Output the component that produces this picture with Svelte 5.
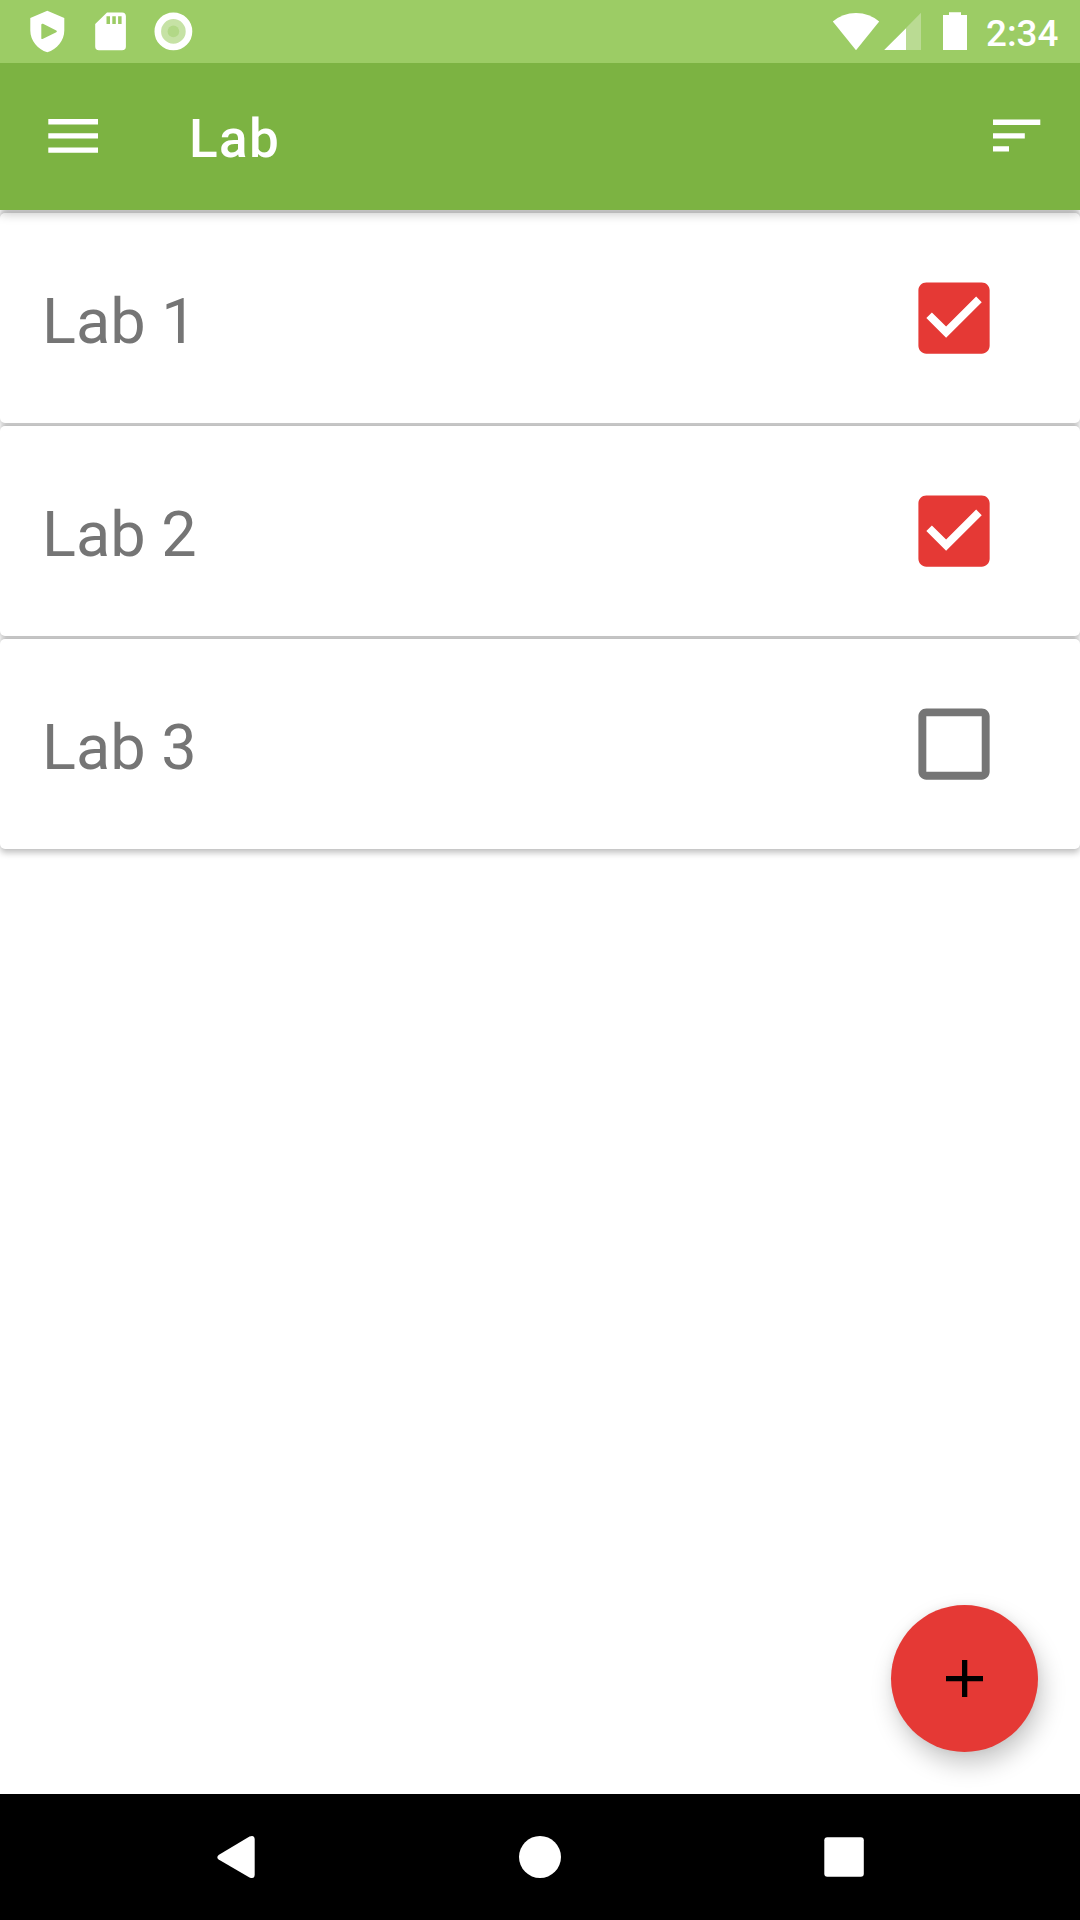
<script>
  let labs = $state([
    { name: 'Lab 1', done: true },
    { name: 'Lab 2', done: true },
    { name: 'Lab 3', done: false }
  ]);
</script>

<div class="screen">
  <div class="status">
    <div class="group">
      <svg width="63" height="63" viewBox="16 0 63 63">
        <path fill="#fff" fill-rule="evenodd" d="M47.3 10.7 64.3 18V30.500C64.300 40.500 57 49.500 47.300 52.200 37.600 49.500 30.300 40.500 30.300 30.500V18ZM41.300 24.800V38.200Q41.500 39.600 43 38.800L56.300 32.200Q57.600 31.300 56.300 30.500L43 23.800Q41.500 23.200 41.300 24.800Z" />
      </svg>
      <svg width="63" height="63" viewBox="79 0 63 63">
        <path fill="#fff" fill-rule="evenodd" d="M107 12.500H122Q125.900 12.500 125.900 16.300V46.500Q125.900 50.300 122 50.300H99Q95.200 50.300 95.200 46.500V24ZM106.500 16.200V24H110V16.200ZM112.300 16.200V24H115.800V16.200ZM118.100 16.200V24H121.600V16.200Z" />
      </svg>
      <svg width="63" height="63" viewBox="142 0 63 63">
        <circle cx="173.400" cy="31.400" r="12.800" fill="#c6e2a5" />
        <circle cx="173.400" cy="31.400" r="5.800" fill="#b2d887" />
        <circle cx="173.400" cy="31.400" r="15.600" fill="none" stroke="#fff" stroke-width="6.600" />
      </svg>
    </div>
    <div class="group">
      <svg width="50" height="63" viewBox="831 0 50 63">
        <path fill="#fff" d="M856 50.300 832.800 21.500Q842.500 12.900 856 12.900T879.200 21.500Z" />
      </svg>
      <svg width="46" height="63" viewBox="881 0 46 63">
        <path fill="#fff" fill-opacity=".3" d="M906 28 921 12.800V50H906Z" />
        <path fill="#fff" d="M884.200 50 906 28.200V50Z" />
      </svg>
      <svg width="59" height="63" viewBox="927 0 59 63">
        <path fill="#fff" d="M943 15H949V12.200H961V15H967V50H943Z" />
      </svg>
      <span class="time">2:34</span>
    </div>
  </div>

  <header class="bar">
    <svg width="63" height="63" viewBox="42 105 63 63">
      <path fill="#fff" d="M48.300 119H98V124.400H48.300ZM48.300 133.200H98V138.500H48.300ZM48.300 147.400H98V152.800H48.300Z" />
    </svg>
    <h1>Lab</h1>
    <svg width="63" height="63" viewBox="985 105 63 63">
      <path fill="#fff" d="M993 119.500H1040.300V125H993ZM993 133.200H1024.800V138.600H993ZM993 146.200H1009V151.500H993Z" />
    </svg>
  </header>

  <main>
    {#each labs as lab}
      <div class="card">
        <span>{lab.name}</span>
        <button aria-label={lab.name} onclick={() => (lab.done = !lab.done)}>
          <svg width="95" height="95" viewBox="0.120 0.120 24 24">
            {#if lab.done}
              <path fill="#e53935" d="M19 3H5c-1.110 0-2 .9-2 2v14c0 1.100.890 2 2 2h14c1.110 0 2-.9 2-2V5c0-1.100-.890-2-2-2zm-9 14l-5-5 1.410-1.410L10 14.170l7.590-7.590L19 8l-9 9z" />
            {:else}
              <path fill="#757575" d="M19 5v14H5V5h14m0-2H5c-1.100 0-2 .9-2 2v14c0 1.100.9 2 2 2h14c1.100 0 2-.9 2-2V5c0-1.100-.9-2-2-2z" />
            {/if}
          </svg>
        </button>
      </div>
    {/each}
    <button class="fab" aria-label="Add">
      <svg width="63" height="63" viewBox="0 0 63 63">
        <path fill="#000" d="M13 29H29V13H34.300V29H50V34.200H34.300V50H29V34.200H13Z" />
      </svg>
    </button>
  </main>

  <nav>
    <svg width="304" height="126" viewBox="84 1794 304 126">
      <path fill="#fff" d="M218.600 1855 249.500 1836.500Q254.700 1834.600 254.700 1839.500V1874.500Q254.700 1879.400 249.500 1877.500L218.600 1859.500Q216 1857.300 218.600 1855Z" />
    </svg>
    <svg width="304" height="126" viewBox="0 0 304 126">
      <circle cx="152" cy="63" r="21" fill="#fff" />
    </svg>
    <svg width="304" height="126" viewBox="0 0 304 126">
      <rect x="132.300" y="43.300" width="39.500" height="39.500" rx="3" fill="#fff" />
    </svg>
  </nav>
</div>

<style>
  :global(body) {
    margin: 0;
  }
  .screen {
    width: 1080px;
    height: 1920px;
    display: flex;
    flex-direction: column;
    background: #fff;
    font-family: Roboto, sans-serif;
    overflow: hidden;
  }
  svg {
    display: block;
    flex: none;
  }
  .status {
    height: 63px;
    flex: none;
    box-sizing: border-box;
    padding: 0 21px 0 16px;
    display: flex;
    justify-content: space-between;
    position: relative;
    z-index: 2;
    background: #9ccc65;
  }
  .group {
    display: flex;
  }
  .time {
    width: 73px;
    white-space: nowrap;
    font-size: 36.75px;
    font-weight: 500;
    line-height: 67px;
    color: #fff;
  }
  .bar {
    height: 147px;
    flex: none;
    box-sizing: border-box;
    padding: 42px 32px 42px 42px;
    display: flex;
    position: relative;
    z-index: 1;
    background: #7cb342;
    box-shadow: 0 4px 10px rgba(0, 0, 0, 0.22);
  }
  h1 {
    flex: 1;
    margin: 0 0 0 84px;
    font-size: 53px;
    font-weight: 500;
    letter-spacing: 1.4px;
    line-height: 68px;
    color: #fff;
  }
  main {
    flex: 1;
    position: relative;
    display: flex;
    flex-direction: column;
    gap: 3px;
    padding-top: 3px;
  }
  .card {
    height: 210px;
    box-sizing: border-box;
    padding: 0 78px 0 42px;
    display: flex;
    align-items: center;
    justify-content: space-between;
    border-radius: 5px;
    background: #fff;
    box-shadow: 0 4px 6px rgba(0, 0, 0, 0.24), 0 -1px 3px rgba(0, 0, 0, 0.12);
  }
  .card:first-child {
    box-shadow: 0 4px 6px rgba(0, 0, 0, 0.24), 0 -3px 3px rgba(0, 0, 0, 0.14);
  }
  .card span {
    padding-top: 8px;
    font-size: 63px;
    line-height: 74px;
    color: #757575;
  }
  button {
    padding: 0;
    border: 0;
    background: none;
  }
  .card button {
    padding-top: 1px;
  }
  .fab {
    position: absolute;
    right: 42px;
    bottom: 42px;
    width: 147px;
    height: 147px;
    display: flex;
    align-items: center;
    justify-content: center;
    border-radius: 50%;
    background: #e53935;
    box-shadow: 4px 12px 24px rgba(0, 0, 0, 0.22), 0 0 10px rgba(0, 0, 0, 0.05);
  }
  nav {
    height: 126px;
    flex: none;
    display: flex;
    justify-content: center;
    position: relative;
    background: #000;
  }
</style>
